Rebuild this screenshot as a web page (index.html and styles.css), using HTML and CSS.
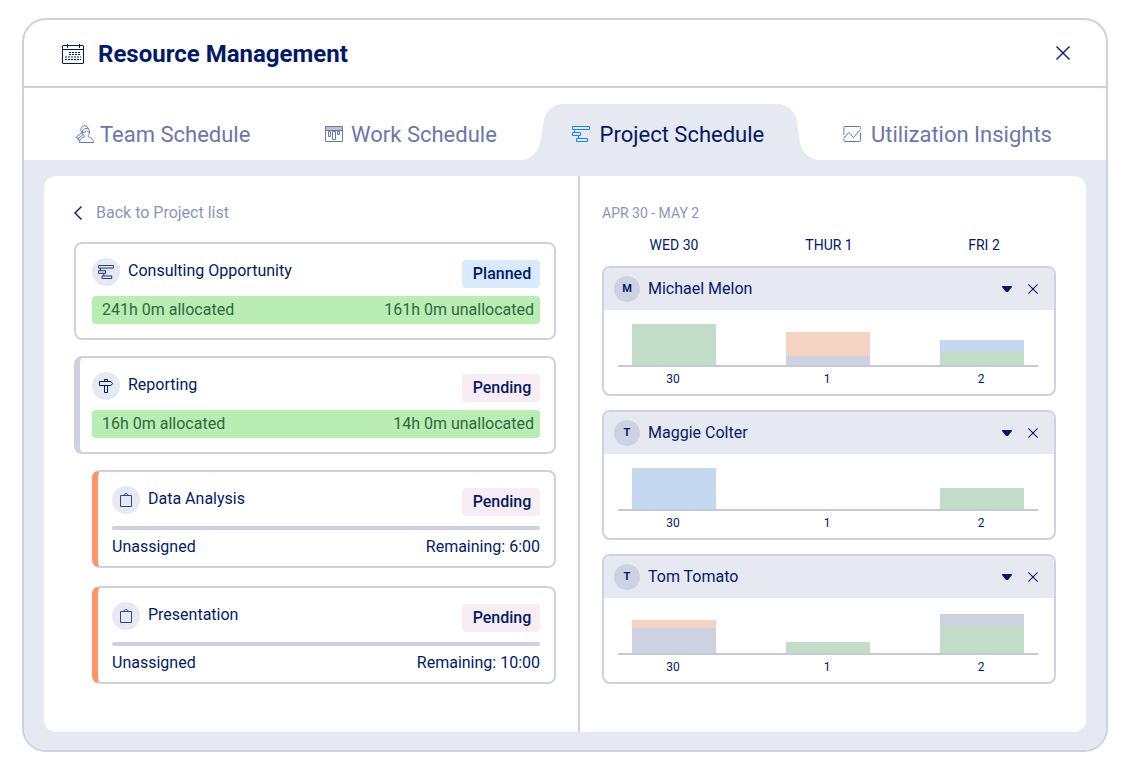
FILE: index.html
```html
<!DOCTYPE html>
<html lang="en">
<head>
  <meta charset="UTF-8">
  <meta name="viewport" content="width=device-width, initial-scale=1.0">
  <title>Resource Management</title>
  <link rel="stylesheet" href="styles.css">
</head>
<body>
  <!-- Shared icons -->
  <svg class="icon-defs" aria-hidden="true">
    <symbol id="icon-close" viewBox="0 0 14 14">
      <path d="M0.5 0.5L13.5 13.5M13.5 0.5L0.5 13.5"/>
    </symbol>
    <symbol id="icon-caret" viewBox="0 0 10 6">
      <path d="M0 0H10V1L6 6H4L0 1Z"/>
    </symbol>
    <symbol id="icon-project" viewBox="0 0 18 16">
      <path d="M0.5 0.5H17.5V3.5H0.5ZM2.5 3.5V6.5M0.5 6.5H8.5V9.5H0.5ZM6.5 9.5V12.5M4.5 12.5H15.5V15.5H4.5Z"/>
    </symbol>
    <symbol id="icon-task" viewBox="0 0 12 14">
      <path d="M0.5 2.5H11.5V13.5H0.5ZM3.5 2.8Q4 0.6 6 0.6Q8 0.6 8.5 2.8"/>
    </symbol>
  </svg>

  <main class="window">
    <header class="window-header">
      <svg class="calendar-icon" viewBox="0 0 22 20" aria-hidden="true">
        <path d="M1 1.5H21Q21.5 1.5 21.5 2V19Q21.5 19.5 21 19.5H1Q0.5 19.5 0.5 19V2Q0.5 1.5 1 1.5ZM0.5 5.5H21.5M5.5 0V4M17.5 0V4"/>
        <path class="dots" d="M7 8.5H19M7 10.5H19M3 13H19M3 15.5H19"/>
      </svg>
      <h1>Resource Management</h1>
      <button class="close-button" type="button" aria-label="Close">
        <svg viewBox="0 0 14 14"><use href="#icon-close"/></svg>
      </button>
    </header>

    <nav class="tabs">
      <button class="tab tab-team" type="button">
        <svg class="tab-icon" viewBox="0 0 18 18" aria-hidden="true">
          <path d="M10 3.5C12.5 3.5 13.8 5 13.6 7C13.4 9 12.5 10.3 11.8 11C12 12.5 17.5 12.5 17.5 17.5H3.5C3.5 12.5 8.6 12.5 8.6 11C7 10 6.4 8.5 6.4 7C6.4 5 7.8 3.5 10 3.5ZM6.5 7.4Q9.5 7.5 10.4 5.6Q11.5 7.2 13.5 7.2"/>
          <path d="M12.5 3.9Q11.5 0.5 8.5 0.6Q4.5 1 5 5.5Q5.3 8 6.8 9.3Q6.5 11 2.6 13Q1.8 14 1.8 15H4M5.2 7.8Q5 9.5 1.5 10.8Q0.5 12 0.5 13H2.5"/>
        </svg>
        Team Schedule
      </button>
      <button class="tab" type="button">
        <svg class="tab-icon" viewBox="0 0 18 16" aria-hidden="true">
          <path class="band" d="M1 1H17V4H1Z"/>
          <path d="M0.5 0.5H17.5V15.5H0.5ZM0.5 4.5H17.5M3.5 5.5H5.5V10.5H3.5ZM7.5 5.5H10.5V13.5H7.5ZM12.5 5.5H14.5V8.5H12.5Z"/>
        </svg>
        Work Schedule
      </button>
      <button class="tab tab-active" type="button" aria-current="page">
        <svg class="tab-shape" viewBox="0 0 300 56" aria-hidden="true">
          <path d="M0 56C10 56 18 49 20 39L24 16C26 6 34 0 43 0H257C267 0 275 7 277 17L280 39C282 49 290 56 300 56Z"/>
        </svg>
        <svg class="tab-icon" viewBox="0 0 18 16" aria-hidden="true"><use href="#icon-project"/></svg>
        <span class="tab-label">Project Schedule</span>
      </button>
      <button class="tab tab-insights" type="button">
        <svg class="tab-icon" viewBox="0 0 18 16" aria-hidden="true">
          <path d="M0.9 9V1.5Q0.9 0.5 1.9 0.5H16.5Q17.5 0.5 17.5 1.5V3M17.5 6.5V14.5Q17.5 15.5 16.5 15.5H1.9Q0.9 15.5 0.9 14.5V12.5M0.5 11.2L2 11.2L5.6 6.6L7.4 7.8L10.3 11.8L16.2 4.8L17.6 4.2"/>
        </svg>
        Utilization Insights
      </button>
    </nav>

    <div class="window-body">
      <div class="panel">
        <section class="projects">
          <a class="back-link" href="#">
            <svg viewBox="0 0 8 14" aria-hidden="true"><path d="M7.5 0.5L1 7L7.5 13.5"/></svg>
            Back to Project list
          </a>

          <div class="project-list">
            <article class="card">
              <div class="card-top">
                <span class="card-icon">
                  <svg class="icon-wide" viewBox="0 0 18 16" aria-hidden="true"><use href="#icon-project"/></svg>
                </span>
                <h2>Consulting Opportunity</h2>
                <span class="badge badge-planned">Planned</span>
              </div>
              <div class="hours">
                <span>241h 0m allocated</span>
                <span>161h 0m unallocated</span>
              </div>
            </article>

            <article class="card card-selected">
              <div class="card-top">
                <span class="card-icon">
                  <svg class="icon-sign" viewBox="0 0 14 14" aria-hidden="true">
                    <path d="M0.5 2.5H12L13.5 4.5L12 6.5H0.5ZM5.5 6.5V13.5H8.5V6.5M5.5 2.5V0.5H8.5V2.5"/>
                  </svg>
                </span>
                <h2>Reporting</h2>
                <span class="badge badge-pending">Pending</span>
              </div>
              <div class="hours">
                <span>16h 0m allocated</span>
                <span>14h 0m unallocated</span>
              </div>
            </article>

            <div class="task-list">
              <article class="card card-task">
                <div class="card-top">
                  <span class="card-icon">
                    <svg class="icon-task" viewBox="0 0 12 14" aria-hidden="true"><use href="#icon-task"/></svg>
                  </span>
                  <h2>Data Analysis</h2>
                  <span class="badge badge-pending">Pending</span>
                </div>
                <div class="task-info">
                  <span>Unassigned</span>
                  <span>Remaining: 6:00</span>
                </div>
              </article>

              <article class="card card-task">
                <div class="card-top">
                  <span class="card-icon">
                    <svg class="icon-task" viewBox="0 0 12 14" aria-hidden="true"><use href="#icon-task"/></svg>
                  </span>
                  <h2>Presentation</h2>
                  <span class="badge badge-pending">Pending</span>
                </div>
                <div class="task-info">
                  <span>Unassigned</span>
                  <span>Remaining: 10:00</span>
                </div>
              </article>
            </div>
          </div>
        </section>

        <section class="people">
          <p class="range">APR 30 - MAY 2</p>
          <div class="days">
            <span>WED 30</span>
            <span>THUR 1</span>
            <span>FRI 2</span>
          </div>

          <div class="people-list">
            <article class="person">
              <header class="person-header">
                <span class="avatar">M</span>
                <h2>Michael Melon</h2>
                <button class="caret-button" type="button" aria-label="Collapse Michael Melon">
                  <svg viewBox="0 0 10 6"><use href="#icon-caret"/></svg>
                </button>
                <button class="remove-button" type="button" aria-label="Remove Michael Melon">
                  <svg viewBox="0 0 14 14"><use href="#icon-close"/></svg>
                </button>
              </header>
              <div class="chart">
                <div class="plot">
                  <div class="bar">
                    <div class="green" style="height: 41px"></div>
                  </div>
                  <div class="bar">
                    <div class="orange" style="height: 24px"></div>
                    <div class="gray" style="height: 9px"></div>
                  </div>
                  <div class="bar">
                    <div class="blue" style="height: 12px"></div>
                    <div class="green" style="height: 13px"></div>
                  </div>
                </div>
                <div class="plot-labels">
                  <span>30</span>
                  <span>1</span>
                  <span>2</span>
                </div>
              </div>
            </article>

            <article class="person">
              <header class="person-header">
                <span class="avatar">T</span>
                <h2>Maggie Colter</h2>
                <button class="caret-button" type="button" aria-label="Collapse Maggie Colter">
                  <svg viewBox="0 0 10 6"><use href="#icon-caret"/></svg>
                </button>
                <button class="remove-button" type="button" aria-label="Remove Maggie Colter">
                  <svg viewBox="0 0 14 14"><use href="#icon-close"/></svg>
                </button>
              </header>
              <div class="chart">
                <div class="plot">
                  <div class="bar">
                    <div class="blue" style="height: 41px"></div>
                  </div>
                  <div class="bar"></div>
                  <div class="bar">
                    <div class="green" style="height: 21px"></div>
                  </div>
                </div>
                <div class="plot-labels">
                  <span>30</span>
                  <span>1</span>
                  <span>2</span>
                </div>
              </div>
            </article>

            <article class="person">
              <header class="person-header">
                <span class="avatar">T</span>
                <h2>Tom Tomato</h2>
                <button class="caret-button" type="button" aria-label="Collapse Tom Tomato">
                  <svg viewBox="0 0 10 6"><use href="#icon-caret"/></svg>
                </button>
                <button class="remove-button" type="button" aria-label="Remove Tom Tomato">
                  <svg viewBox="0 0 14 14"><use href="#icon-close"/></svg>
                </button>
              </header>
              <div class="chart">
                <div class="plot">
                  <div class="bar">
                    <div class="orange" style="height: 8px"></div>
                    <div class="gray" style="height: 25px"></div>
                  </div>
                  <div class="bar">
                    <div class="green" style="height: 11px"></div>
                  </div>
                  <div class="bar">
                    <div class="gray" style="height: 12px"></div>
                    <div class="green" style="height: 27px"></div>
                  </div>
                </div>
                <div class="plot-labels">
                  <span>30</span>
                  <span>1</span>
                  <span>2</span>
                </div>
              </div>
            </article>
          </div>
        </section>
      </div>
    </div>
  </main>
</body>
</html>
```
FILE: styles.css
```css
* {
  box-sizing: border-box;
}
body {
  margin: 18px 20px 20px 22px;
  font-family: Roboto, Arial, sans-serif;
  font-size: 16px;
  color: #021a66;
  background-color: #fff;
}
h1, h2, p {
  margin: 0;
}
button {
  padding: 0;
  border: none;
  background: none;
  font: inherit;
  color: inherit;
  cursor: pointer;
}
svg {
  display: block;
  flex: none;
  fill: none;
  stroke: currentColor;
}
.icon-defs {
  position: absolute;
  width: 0;
  height: 0;
}

/* Window */
.window {
  border: 2px solid #cdd1e2;
  border-radius: 24px;
  overflow: hidden;
}
.window-header {
  display: flex;
  align-items: center;
  gap: 14px;
  height: 68px;
  padding: 0 36px 0 38px;
  border-bottom: 2px solid #cdd1e2;
}
.window-header h1 {
  flex: 1;
  padding-top: 2px;
  font-size: 24px;
  line-height: 28px;
  font-weight: 700;
}
.calendar-icon {
  width: 22px;
  height: 20px;
  margin-top: 2px;
}
.calendar-icon .dots {
  stroke-dasharray: 2 1;
}
.close-button svg {
  width: 14px;
  height: 14px;
  stroke-width: 1.4;
}

/* Tabs */
.tabs {
  display: flex;
  justify-content: space-between;
  padding: 16px 54px 0 52px;
}
.tab {
  position: relative;
  display: flex;
  align-items: center;
  gap: 8px;
  height: 56px;
  padding-top: 6px;
  font-size: 22px;
  line-height: 28px;
  white-space: nowrap;
  color: #6b77a6;
}
.tab-team {
  gap: 6px;
}
.tab-icon {
  position: relative;
  width: 18px;
  height: 18px;
  margin-bottom: 2px;
}
.tab-icon .band {
  fill: #b9c0d6;
  stroke: none;
}
.tab-active,
.tab-insights {
  gap: 10px;
}
.tab-active {
  margin-right: 4px;
  color: #021a66;
}
.tab-active .tab-icon {
  color: #1a80f8;
}
.tab-label {
  position: relative;
}
.tab-shape {
  position: absolute;
  left: -52px;
  bottom: 0;
  width: 300px;
  height: 56px;
  fill: #e6e9f1;
  stroke: none;
}

.window-body {
  padding: 16px 20px 18px;
  background-color: #e6e9f1;
}
.panel {
  display: grid;
  grid-template-columns: 536fr 506fr;
  border-radius: 12px;
  background-color: #fff;
}

/* Projects */
.projects {
  padding: 26px 22px 48px 30px;
  border-right: 2px solid #cdd1e2;
}
.back-link {
  display: flex;
  align-items: center;
  gap: 14px;
  margin-bottom: 18px;
  line-height: 22px;
  color: #8c96b9;
  text-decoration: none;
}
.back-link svg {
  width: 8px;
  height: 14px;
  color: #021a66;
  stroke-width: 1.4;
}
.project-list {
  display: grid;
  gap: 16px;
}
.task-list {
  display: grid;
  gap: 18px;
  padding-left: 18px;
}
.card {
  padding: 14px 14px 14px 16px;
  border: 2px solid #cdd1e2;
  border-radius: 8px;
}
.card-selected {
  padding-left: 12px;
  border-left-width: 6px;
}
.card-task {
  padding: 14px 14px 10px;
  border-left: 6px solid #ff9468;
}
.card-top {
  display: flex;
  align-items: flex-start;
  gap: 8px;
}
.card-top h2 {
  flex: 1;
  font-size: 16px;
  line-height: 26px;
  font-weight: 400;
}
.card-icon {
  display: flex;
  align-items: center;
  justify-content: center;
  width: 28px;
  height: 28px;
  border-radius: 50%;
  background-color: #e6e9f1;
}
.icon-wide {
  width: 16px;
  height: 14px;
}
.icon-sign {
  width: 14px;
  height: 14px;
}
.icon-task {
  width: 12px;
  height: 14px;
  stroke: #354682;
}
.badge {
  width: 78px;
  margin-top: 2px;
  padding-left: 2px;
  border-radius: 4px;
  font-weight: 500;
  line-height: 28px;
  text-align: center;
}
.badge-planned {
  background-color: #daeafd;
}
.badge-pending {
  background-color: #f9edf5;
}
.hours {
  display: flex;
  justify-content: space-between;
  margin-top: 8px;
  padding: 0 6px 0 10px;
  border-radius: 4px;
  line-height: 28px;
  color: #2b6b3f;
  background-color: #b9edb3;
}
.task-info {
  display: flex;
  flex-wrap: wrap;
  justify-content: space-between;
  margin-top: 10px;
  line-height: 18px;
}
.task-info::before {
  content: "";
  width: 100%;
  height: 4px;
  margin-bottom: 8px;
  border-radius: 2px;
  background-color: #cdd1e2;
}

/* People */
.people {
  padding: 26px 30px 48px 22px;
}
.range {
  font-size: 14px;
  line-height: 22px;
  color: #8c96b9;
}
.days,
.plot,
.plot-labels {
  display: grid;
  grid-template-columns: repeat(3, 84px);
  justify-content: space-between;
  text-align: center;
}
.days {
  margin: 12px 0;
  padding: 0 30px;
  font-size: 14px;
  line-height: 18px;
}
.people-list {
  display: grid;
  gap: 14px;
}
.person {
  border: 2px solid #cdd1e2;
  border-radius: 8px;
  overflow: hidden;
}
.person-header {
  display: flex;
  align-items: center;
  height: 42px;
  padding: 0 16px 0 10px;
  background-color: #e6e9f1;
}
.person-header h2 {
  flex: 1;
  font-size: 16px;
  line-height: 20px;
  font-weight: 400;
}
.avatar {
  width: 26px;
  margin-right: 8px;
  border-radius: 50%;
  font-size: 11px;
  line-height: 26px;
  font-weight: 700;
  text-align: center;
  background-color: #cdd1e2;
}
.caret-button svg {
  width: 10px;
  height: 6px;
  fill: currentColor;
  stroke: none;
}
.remove-button {
  margin-left: 16px;
}
.remove-button svg {
  width: 10px;
  height: 10px;
  stroke-width: 1.5;
}
.chart {
  padding: 0 16px 9px 14px;
}
.plot {
  align-items: end;
  height: 57px;
  padding: 0 14px;
  border-bottom: 2px solid #c6cad8;
}
.plot-labels {
  padding: 4px 15px 0 13px;
  font-size: 12px;
  line-height: 16px;
  margin-bottom: -2px;
}
.green {
  background-color: #c1dcc7;
}
.orange {
  background-color: #f5d3c4;
}
.blue {
  background-color: #c4d8ef;
}
.gray {
  background-color: #cdd1e2;
}
```
